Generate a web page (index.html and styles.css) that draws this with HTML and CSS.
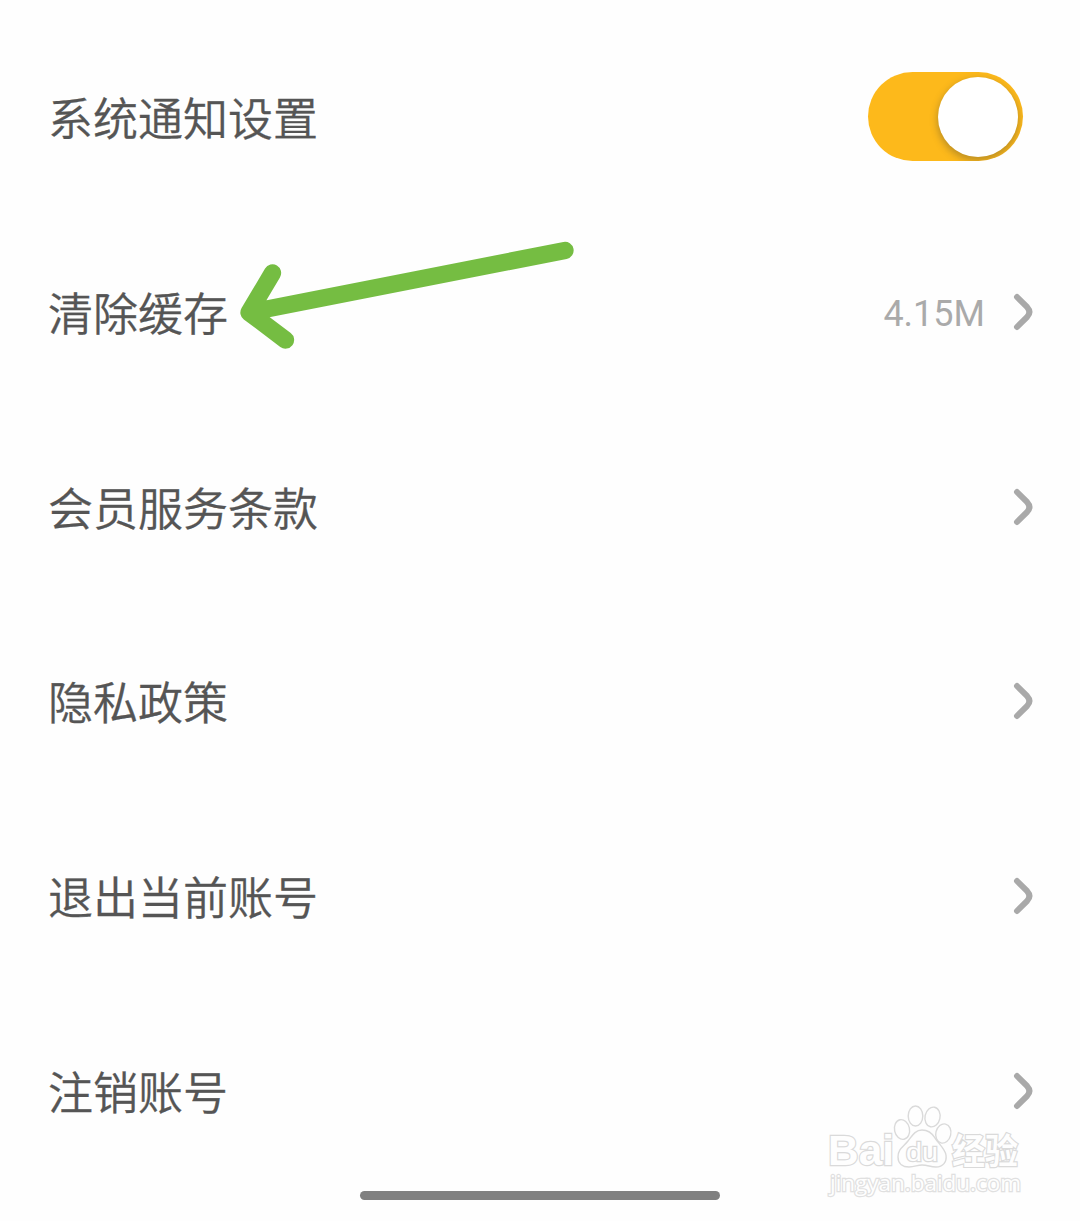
FILE: index.html
```html
<!DOCTYPE html>
<html lang="zh-CN">
<head>
<meta charset="utf-8">
<title>设置</title>
<link rel="stylesheet" href="styles.css">
</head>
<body>
<main class="screen">
  <ul class="settings">
    <li class="row"><span class="label">系统通知设置</span><span class="toggle" role="switch" aria-checked="true"><span class="knob"></span></span></li>
    <li class="row"><span class="label">清除缓存</span><span class="value">4.15M</span><svg class="chevron" viewBox="0 0 20 38"><path d="M4 4 14.2 14.2Q18.6 19 14.2 23.8L4 34"/></svg></li>
    <li class="row"><span class="label">会员服务条款</span><svg class="chevron" viewBox="0 0 20 38"><path d="M4 4 14.2 14.2Q18.6 19 14.2 23.8L4 34"/></svg></li>
    <li class="row"><span class="label">隐私政策</span><svg class="chevron" viewBox="0 0 20 38"><path d="M4 4 14.2 14.2Q18.6 19 14.2 23.8L4 34"/></svg></li>
    <li class="row"><span class="label">退出当前账号</span><svg class="chevron" viewBox="0 0 20 38"><path d="M4 4 14.2 14.2Q18.6 19 14.2 23.8L4 34"/></svg></li>
    <li class="row"><span class="label">注销账号</span><svg class="chevron" viewBox="0 0 20 38"><path d="M4 4 14.2 14.2Q18.6 19 14.2 23.8L4 34"/></svg></li>
  </ul>
  <div class="home-bar"></div>
  <svg class="arrow" viewBox="0 0 370 130"><path d="M345 20.500 29 82.500M52.500 43 29 82.500 65.500 110"/></svg>
  <svg class="watermark" viewBox="0 0 240 110">
    <g class="mark">
      <text class="brand" x="18" y="65" textLength="66" lengthAdjust="spacingAndGlyphs">Bai</text>
      <ellipse cx="92" cy="29.500" rx="7.500" ry="10" transform="rotate(-12 92 29.500)"/>
      <ellipse cx="105.500" cy="16" rx="7.300" ry="10"/>
      <ellipse cx="122.500" cy="17" rx="7.500" ry="10" transform="rotate(12 122.500 17)"/>
      <ellipse cx="133.300" cy="33.500" rx="7.500" ry="9.700" transform="rotate(14 133.300 33.500)"/>
      <path d="M112 30C105 30 102 36 98 41C93 47 88 49 88 57C88 64 93 67 99 67C105 67 107 65 112 65C118 65 120 67 126 67C133 67 137 62 136 55C135 49 129 44 125 38C122 33 118 30 112 30Z"/>
      <text class="du" x="96" y="60.500" textLength="32" lengthAdjust="spacingAndGlyphs">du</text>
      <text class="jingyan" x="142" y="63.500" textLength="66" lengthAdjust="spacingAndGlyphs">经验</text>
      <text class="site" x="20" y="90.500" textLength="191" lengthAdjust="spacingAndGlyphs">jingyan.baidu.com</text>
    </g>
  </svg>
</main>
</body>
</html>
```
FILE: styles.css
```css
body {
  margin: 0;
  background: #fefefe;
}

.screen {
  position: relative;
  display: flex;
  flex-direction: column;
  height: 1221px;
  box-sizing: border-box;
  padding-top: 20px;
  overflow: hidden;
  font-family: Roboto, "Noto Sans CJK SC", sans-serif;
}

.settings {
  display: grid;
  grid-auto-rows: 194.7px;
  margin: 0;
  padding: 0 47px 0 48px;
  list-style: none;
}

.row {
  display: flex;
  align-items: center;
}

.label {
  margin-right: auto;
  color: #555;
  font-family: "Noto Sans CJK SC", sans-serif;
  font-size: 45px;
  font-weight: 350;
  line-height: 66px;
  -webkit-text-stroke: 0.3px #555;
}

.toggle {
  display: flex;
  justify-content: flex-end;
  box-sizing: border-box;
  width: 155px;
  height: 89px;
  margin: 0 10px 1px 0;
  padding: 5px 5px 4px;
  overflow: hidden;
  border-radius: 45px;
  background: #fdb91b;
}

.knob {
  width: 80px;
  height: 80px;
  border-radius: 50%;
  background: #fff;
  box-shadow: 0 3px 7px 1px rgba(90, 80, 50, 0.38);
}

.value {
  margin-right: 28px;
  padding-top: 4px;
  color: #aaa;
  font-size: 36px;
  line-height: 42px;
}

.chevron {
  width: 20px;
  height: 38px;
}

.chevron path {
  fill: none;
  stroke: #a9a9a9;
  stroke-width: 6;
  stroke-linecap: round;
}

.home-bar {
  width: 360px;
  height: 9px;
  margin: 3px auto 0;
  border-radius: 5px;
  background: #808080;
}

.arrow {
  position: absolute;
  top: 230px;
  left: 220px;
  width: 370px;
  height: 130px;
}

.arrow path {
  fill: none;
  stroke: #75bd42;
  stroke-width: 17.3;
  stroke-linecap: round;
  stroke-linejoin: round;
}

.watermark {
  position: absolute;
  top: 1100px;
  left: 810px;
  width: 240px;
  height: 110px;
}

.mark {
  fill: #fefefe;
  stroke: #dadada;
  stroke-width: 1.4;
}

.watermark text {
  font-family: "Liberation Sans", sans-serif;
  font-weight: bold;
  paint-order: stroke;
  stroke-width: 2.4;
}

.watermark .brand {
  font-size: 43px;
}

.watermark .du {
  font-size: 26px;
  font-weight: normal;
}

.watermark .jingyan {
  font-family: "Noto Sans CJK SC", sans-serif;
  font-size: 35px;
}

.watermark .site {
  font-family: "Open Sans", sans-serif;
  font-size: 22px;
  font-weight: 500;
  stroke: #e0e0e0;
}
```
